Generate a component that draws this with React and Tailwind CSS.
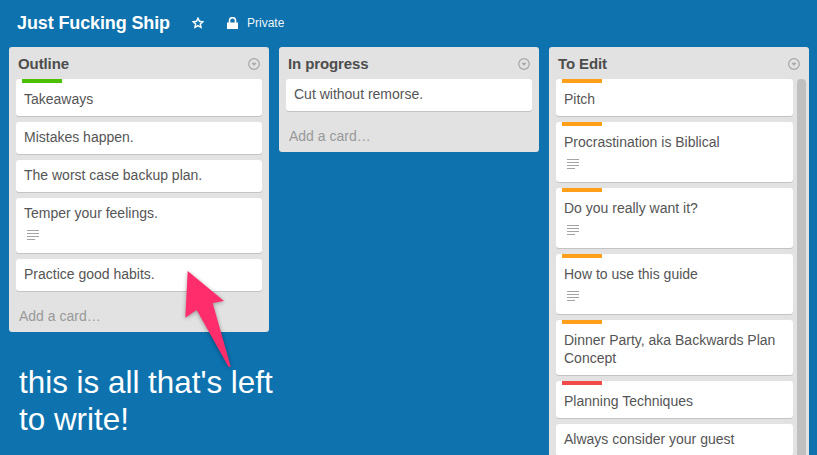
import React from "react";

const GREEN = "bg-[#4bbf00]";
const ORANGE = "bg-[#ff9f1a]";
const RED = "bg-[#f24a4a]";

const lists = [
  {
    title: "Outline",
    width: "w-[246px]",
    addCard: true,
    cards: [
      { text: "Takeaways", label: GREEN },
      { text: "Mistakes happen." },
      { text: "The worst case backup plan." },
      { text: "Temper your feelings.", desc: true },
      { text: "Practice good habits." },
    ],
  },
  {
    title: "In progress",
    width: "w-[246px]",
    addCard: true,
    cards: [{ text: "Cut without remorse." }],
  },
  {
    title: "To Edit",
    width: "w-[237px]",
    scroll: true,
    cards: [
      { text: "Pitch", label: ORANGE },
      { text: "Procrastination is Biblical", label: ORANGE, desc: true },
      { text: "Do you really want it?", label: ORANGE, desc: true },
      { text: "How to use this guide", label: ORANGE, desc: true },
      { text: "Dinner Party, aka Backwards Plan Concept", label: ORANGE },
      { text: "Planning Techniques", label: RED },
      { text: "Always consider your guest" },
    ],
  },
];

const DescIcon = () => (
  <svg width="12" height="11" viewBox="0 0 12 11" className="ml-[3px] mt-[8px] mb-[4px] block">
    <path d="M0 .5h12M0 3.5h12M0 6.5h12M0 9.5h8" stroke="#a3a3a3" strokeWidth="1" fill="none" />
  </svg>
);

const MenuIcon = () => (
  <svg width="12" height="12" viewBox="0 0 12 12" className="block">
    <circle cx="6" cy="6" r="5.3" stroke="#a6a6a6" strokeWidth="1.2" fill="none" />
    <path d="M3.5 4.8h5L6 8z" fill="#a6a6a6" />
  </svg>
);

const Card = ({ card, width }) => (
  <div className={`relative ${width} shrink-0 rounded-[3px] bg-white px-2 pt-[6px] pb-[8px] shadow-[0_1px_0_#c4c4c4]`}>
    {card.label && <div className={`${card.label} mb-[2px] -mt-[6px] h-1 w-10 ml-[-2px]`} />}
    <div className={`text-sm leading-[18px] text-[#555555] ${card.label ? "pt-[5px]" : ""}`}>{card.text}</div>
    {card.desc && <DescIcon />}
  </div>
);

const List = ({ list }) => (
  <div className={`relative w-[260px] shrink-0 rounded-[3px] bg-[#e2e2e2] ${list.scroll ? "h-[420px] overflow-hidden" : ""}`}>
    <div className="flex h-8 items-center justify-between pl-[9px] pr-[9px] pt-[2px]">
      <h2 className="text-[15px] leading-[18px] font-bold tracking-[-0.1px] text-[#4d4d4d]">{list.title}</h2>
      <MenuIcon />
    </div>
    <div className="flex flex-col gap-[6px] pl-[7px]">
      {list.cards.map((card) => (
        <Card key={card.text} card={card} width={list.width} />
      ))}
    </div>
    {list.addCard && <div className="h-[41px] pt-[16px] pl-[10px] text-sm leading-[18px] text-[#999999]">Add a card…</div>}
    {list.scroll && <div className="absolute top-8 left-[248px] h-[400px] w-[9px] rounded-t-[4px] bg-[#bfbfbf]" />}
  </div>
);

export default function App() {
  return (
    <div className="relative h-[455px] w-[817px] overflow-hidden bg-[#0d72ae] font-['Liberation_Sans',Arial,sans-serif]">
      <header className="flex h-[47px] items-center pl-[17px] pb-[1px] text-white">
        <h1 className="text-[18px] leading-6 font-bold tracking-[-0.12px]">Just Fucking Ship</h1>
        <svg width="12" height="12" viewBox="0 0 24 24" className="ml-[22px]" fill="none" stroke="white" strokeWidth="3">
          <path d="M12 2.5l2.9 6.2 6.8.8-5 4.6 1.3 6.7-6-3.4-6 3.4 1.3-6.7-5-4.6 6.8-.8z" />
        </svg>
        <svg width="11" height="12" viewBox="0 0 11 12" className="ml-[23px]" fill="white">
          <path d="M0 5.500h11V12H0z" />
          <path d="M2.500 6V3.600a3 3 0 0 1 6 0V6" fill="none" stroke="white" strokeWidth="1.6" />
        </svg>
        <span className="ml-[9px] text-xs leading-4 text-white/95">Private</span>
      </header>
      <main className="flex items-start gap-[10px] pl-[9px]">
        {lists.map((list) => (
          <List key={list.title} list={list} />
        ))}
      </main>
      {/* annotation drawn over the board */}
      <svg width="110" height="130" viewBox="0 0 110 130" className="absolute left-[170px] top-[260px] drop-shadow-[0_1px_2px_rgba(0,0,0,0.35)]">
        <path d="M17.700 11L54 41 42.700 43 60.700 106.700 58.500 106.700 26.700 50 15.300 57.700z" fill="#ff2d6b" />
      </svg>
      <div className="absolute left-[19px] top-[364px] text-[31.4px] leading-[37px] text-white">
        this is all that's left
        <br />
        to write!
      </div>
    </div>
  );
}
